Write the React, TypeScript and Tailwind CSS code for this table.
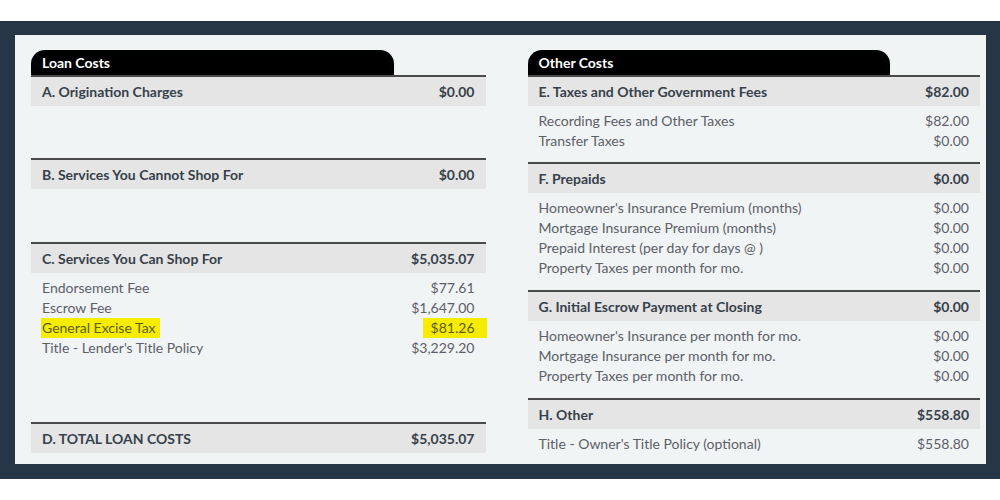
const font = { fontFamily: 'Lato, "Noto Sans", sans-serif' };

type Item = { label: string; value: string; mark?: boolean };

function Header({ label, value }: { label: string; value: string }) {
  return (
    <div className="flex h-[31px] items-center justify-between border-t-2 border-[#4a4a4a] bg-[#e5e5e5] px-[11px] text-[14px] font-bold text-[#37414b]">
      <span>{label}</span>
      <span>{value}</span>
    </div>
  );
}

function Section({ label, value, items = [], h }: { label: string; value: string; items?: Item[]; h: string }) {
  return (
    <div className={h}>
      <Header label={label} value={value} />
      <div className="pt-[5px]">
        {items.map((it) => (
          <div key={it.label} className="flex justify-between px-[11px] text-[14px] leading-[20px] text-[#5c6068]">
            {it.mark ? (
              <>
                <span className="-ml-[1px] bg-[#f6ec00] pr-[4px] pl-[1px] text-[#5e5c1c]">{it.label}</span>
                <span className="-mr-[12px] bg-[#f6ec00] pr-[12px] pl-[8px] text-[#5e5c1c]">{it.value}</span>
              </>
            ) : (
              <>
                <span>{it.label}</span>
                <span>{it.value}</span>
              </>
            )}
          </div>
        ))}
      </div>
    </div>
  );
}

function Tab({ title, w }: { title: string; w: string }) {
  return (
    <div className={`flex h-[25px] items-center rounded-t-[14px] bg-black pl-[11px] text-[14px] font-bold text-white ${w}`}>
      {title}
    </div>
  );
}

export default function App() {
  return (
    <div className="h-[500px] w-[1000px] bg-white pt-[21px]" style={font}>
      <div className="h-[458px] bg-[#263646] pt-[14px] pr-[14px] pl-[15px]">
        <div className="flex h-[429px] gap-[42px] bg-[#f1f4f5] pt-[15px] pr-[6px] pl-[16px]">
          <div className="w-[455px]">
            <Tab title="Loan Costs" w="w-[363px]" />
            <Section label="A. Origination Charges" value="$0.00" h="h-[83px]" />
            <Section label="B. Services You Cannot Shop For" value="$0.00" h="h-[84px]" />
            <Section
              label="C. Services You Can Shop For"
              value="$5,035.07"
              h="h-[180px]"
              items={[
                { label: 'Endorsement Fee', value: '$77.61' },
                { label: 'Escrow Fee', value: '$1,647.00' },
                { label: 'General Excise Tax', value: '$81.26', mark: true },
                { label: "Title - Lender's Title Policy", value: '$3,229.20' },
              ]}
            />
            <Section label="D. TOTAL LOAN COSTS" value="$5,035.07" h="h-[32px]" />
          </div>
          <div className="w-[453px]">
            <Tab title="Other Costs" w="w-[362px]" />
            <Section
              label="E. Taxes and Other Government Fees"
              value="$82.00"
              h="h-[87px]"
              items={[
                { label: 'Recording Fees and Other Taxes', value: '$82.00' },
                { label: 'Transfer Taxes', value: '$0.00' },
              ]}
            />
            <Section
              label="F. Prepaids"
              value="$0.00"
              h="h-[128px]"
              items={[
                { label: "Homeowner's Insurance Premium (months)", value: '$0.00' },
                { label: 'Mortgage Insurance Premium (months)', value: '$0.00' },
                { label: 'Prepaid Interest (per day for days @ )', value: '$0.00' },
                { label: 'Property Taxes per month for mo.', value: '$0.00' },
              ]}
            />
            <Section
              label="G. Initial Escrow Payment at Closing"
              value="$0.00"
              h="h-[108px]"
              items={[
                { label: "Homeowner's Insurance per month for mo.", value: '$0.00' },
                { label: 'Mortgage Insurance per month for mo.', value: '$0.00' },
                { label: 'Property Taxes per month for mo.', value: '$0.00' },
              ]}
            />
            <Section
              label="H. Other"
              value="$558.80"
              h="h-[56px]"
              items={[{ label: "Title - Owner's Title Policy (optional)", value: '$558.80' }]}
            />
          </div>
        </div>
      </div>
    </div>
  );
}
